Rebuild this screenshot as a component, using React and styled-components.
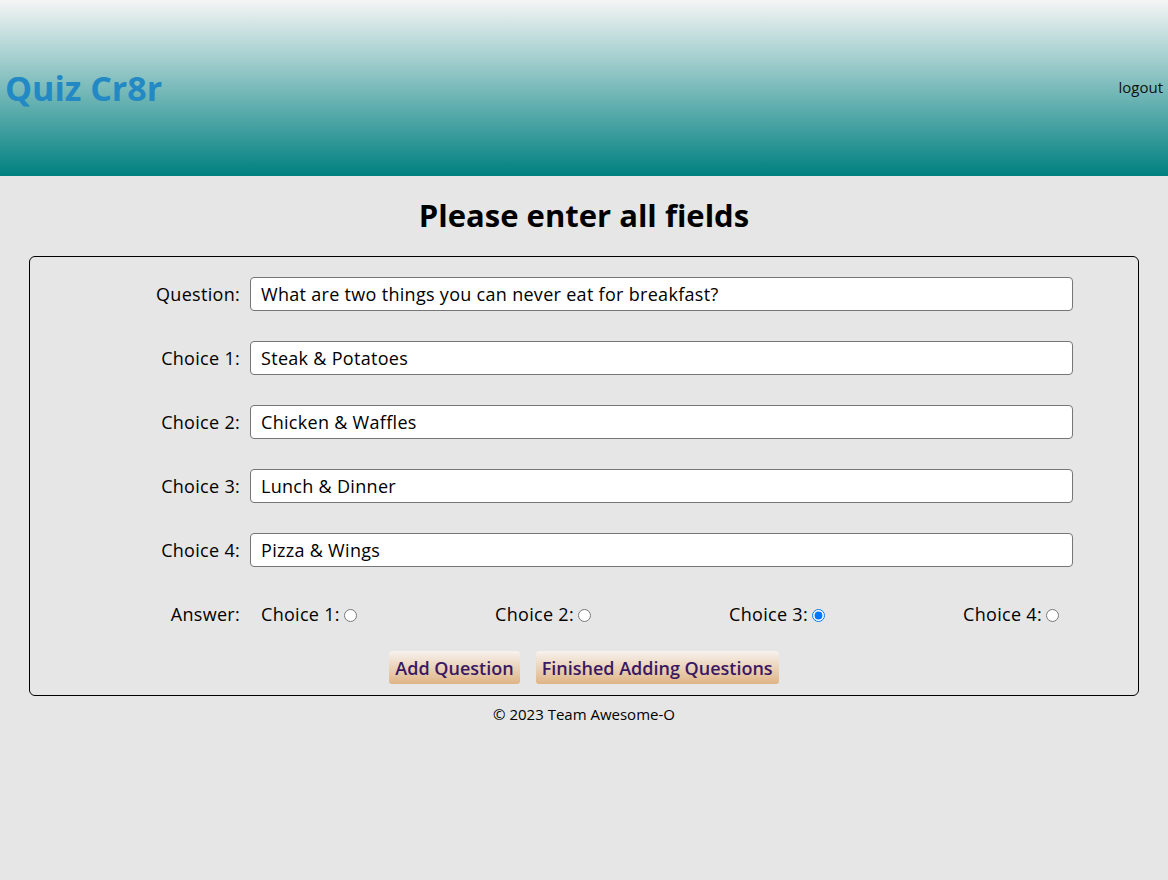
import React, {useState} from "react";
import styled, {createGlobalStyle} from "styled-components";

const FONT = `"Trebuchet MS", "Open Sans", "DejaVu Sans", sans-serif`;

const GlobalStyle = createGlobalStyle`
  body {
    margin: 0;
    background-color: #e6e6e6;
    font-family: ${FONT};
    color: #000;
  }
`

const Header = styled.header`
  height: 176px;
  display: flex;
  align-items: center;
  justify-content: space-between;
  padding: 0 5px 0 5px;
  background: linear-gradient(to bottom, #f5f5f5 0%, #008080 100%);
`

const Brand = styled.div`
  font-size: 34px;
  font-weight: bold;
  color: #2389c4;
`

const Logout = styled.a`
  font-family: "Open Sans", sans-serif;
  font-size: 15px;
  color: #111;
  text-decoration: none;
  cursor: pointer;
  margin-bottom: 3px;
`

const Title = styled.h1`
  margin: 21px 0 22px;
  font-size: 31px;
  line-height: 37px;
  text-align: center;
`

const Form = styled.form`
  margin: 0 29px;
  border: 1px solid #000;
  border-radius: 6px;
  padding: 20px 0 11px;
  display: flex;
  flex-direction: column;
  gap: 20px;
`

const Fields = styled.div`
  display: grid;
  grid-template-columns: 210px 823px;
  column-gap: 10px;
  row-gap: 30px;
`

const Label = styled.label`
  font-size: 18px;
  letter-spacing: 0.3px;
  text-align: right;
  align-self: center;
`

const Input = styled.input`
  box-sizing: border-box;
  height: 34px;
  padding: 0 10px;
  border: 1px solid #767676;
  border-radius: 4px;
  background: #fff;
  font-family: ${FONT};
  font-size: 18px;
  letter-spacing: 0.3px;
  color: #000;

  &:focus {
    outline: none;
  }
`

const Answers = styled.div`
  height: 34px;
  display: flex;
  align-items: center;
  justify-content: space-between;
  padding: 0 11px;
`

const Choice = styled.label`
  font-size: 18px;
  letter-spacing: 0.3px;
  display: flex;
  align-items: center;
`

const Radio = styled.input`
  margin: 2px 3px 0 4px;
`

const Buttons = styled.div`
  display: flex;
  justify-content: center;
  gap: 16px;
`

const Button = styled.button`
  height: 33px;
  padding: 0 6px;
  border: none;
  border-radius: 3px;
  background: linear-gradient(to bottom, #f7f2ee 0%, #dfb486 100%);
  color: #3a1863;
  font-family: ${FONT};
  font-size: 18px;
  font-weight: 600;
  cursor: pointer;
`

const Footer = styled.footer`
  text-align: center;
  font-size: 15px;
  line-height: 20px;
  margin-top: 8px;
`

const fields = [
    {label: "Question:", value: "What are two things you can never eat for breakfast?"},
    {label: "Choice 1:", value: "Steak & Potatoes"},
    {label: "Choice 2:", value: "Chicken & Waffles"},
    {label: "Choice 3:", value: "Lunch & Dinner"},
    {label: "Choice 4:", value: "Pizza & Wings"},
]

const App = () => {
    const [values, setValues] = useState(fields.map(f => f.value))
    const [answer, setAnswer] = useState(3)

    return (
        <>
            <GlobalStyle/>
            <Header>
                <Brand>Quiz Cr8r</Brand>
                <Logout>logout</Logout>
            </Header>
            <Title>Please enter all fields</Title>
            <Form onSubmit={(e) => e.preventDefault()}>
                <Fields>
                    {fields.map((f, i) => (
                        <React.Fragment key={f.label}>
                            <Label>{f.label}</Label>
                            <Input
                                value={values[i]}
                                onChange={(e) => setValues(values.map((v, j) => j === i ? e.target.value : v))}
                            />
                        </React.Fragment>
                    ))}
                    <Label>Answer:</Label>
                    <Answers>
                        {[1, 2, 3, 4].map(n => (
                            <Choice key={n}>
                                Choice {n}:
                                <Radio type="radio" name="answer" checked={answer === n} onChange={() => setAnswer(n)}/>
                            </Choice>
                        ))}
                    </Answers>
                </Fields>
                <Buttons>
                    <Button>Add Question</Button>
                    <Button>Finished Adding Questions</Button>
                </Buttons>
            </Form>
            <Footer>© 2023 Team Awesome-O</Footer>
        </>
    )
}

export default App;
